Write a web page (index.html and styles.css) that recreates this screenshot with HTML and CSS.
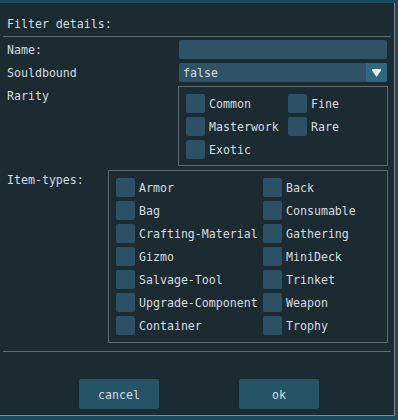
FILE: index.html
```html
<!DOCTYPE html>
<html>
<head>
<meta charset="utf-8">
<link rel="stylesheet" href="styles.css">
</head>
<body>
<div class="window">
  <div class="title">Filter details:</div>
  <div class="sep"></div>
  <div class="form">
    <div class="row">
      <div class="label">Name:</div>
      <div class="input"></div>
    </div>
    <div class="row">
      <div class="label">Souldbound</div>
      <div class="select"><span class="val">false</span><span class="arrow"><svg width="9" height="8" viewBox="0 0 9 8"><path d="M0 0H9V1.5L4.5 8L0 1.5Z" fill="#e8eef0"/></svg></span></div>
    </div>
    <div class="row">
      <div class="label">Rarity</div>
      <div class="box rarity">
        <div class="item"><span class="cb"></span><span class="txt">Common</span></div>
        <div class="item"><span class="cb"></span><span class="txt">Fine</span></div>
        <div class="item"><span class="cb"></span><span class="txt">Masterwork</span></div>
        <div class="item"><span class="cb"></span><span class="txt">Rare</span></div>
        <div class="item"><span class="cb"></span><span class="txt">Exotic</span></div>
      </div>
    </div>
    <div class="row">
      <div class="label">Item-types:</div>
      <div class="box types">
        <div class="item"><span class="cb"></span><span class="txt">Armor</span></div>
        <div class="item"><span class="cb"></span><span class="txt">Back</span></div>
        <div class="item"><span class="cb"></span><span class="txt">Bag</span></div>
        <div class="item"><span class="cb"></span><span class="txt">Consumable</span></div>
        <div class="item"><span class="cb"></span><span class="txt">Crafting-Material</span></div>
        <div class="item"><span class="cb"></span><span class="txt">Gathering</span></div>
        <div class="item"><span class="cb"></span><span class="txt">Gizmo</span></div>
        <div class="item"><span class="cb"></span><span class="txt">MiniDeck</span></div>
        <div class="item"><span class="cb"></span><span class="txt">Salvage-Tool</span></div>
        <div class="item"><span class="cb"></span><span class="txt">Trinket</span></div>
        <div class="item"><span class="cb"></span><span class="txt">Upgrade-Component</span></div>
        <div class="item"><span class="cb"></span><span class="txt">Weapon</span></div>
        <div class="item"><span class="cb"></span><span class="txt">Container</span></div>
        <div class="item"><span class="cb"></span><span class="txt">Trophy</span></div>
      </div>
    </div>
  </div>
  <div class="sep sep2"></div>
  <div class="buttons">
    <div class="btn">cancel</div>
    <div class="btn">ok</div>
  </div>
</div>
</body>
</html>
```
FILE: styles.css
```css
html, body {
  margin: 0;
  padding: 0;
  background: #1c4c5b;
  width: 398px;
  height: 420px;
  overflow: hidden;
}
body {
  font-family: "DejaVu Sans Mono", monospace;
  font-size: 11.6px;
  color: #d6dde0;
}
.window {
  margin-top: 3px;
  width: 395px;
  height: 413px;
  box-sizing: border-box;
  background: #1c2b32;
  border-right: 1px solid #7d8c91;
  border-bottom: 1px solid #7d8c91;
}
.title {
  padding: 14px 0 0 7px;
  line-height: 14px;
  height: 19px;
}
.sep {
  margin: 0 3px;
  height: 1px;
  background: #5d6d73;
}
.form {
  padding: 3px 6px 0 7px;
  display: flex;
  flex-direction: column;
  gap: 4px;
}
.row {
  display: flex;
  justify-content: space-between;
  align-items: flex-start;
}
.label {
  line-height: 17px;
  height: 19px;
  box-sizing: border-box;
  padding-top: 2px;
  white-space: pre;
}
.input {
  width: 208px;
  height: 19px;
  background: #2f5366;
  border-radius: 2px;
  margin-right: 1px;
}
.select {
  width: 208px;
  height: 19px;
  background: #2f5366;
  border-radius: 2px;
  margin-right: 1px;
  display: flex;
  justify-content: space-between;
  align-items: center;
}
.select .val { padding: 2px 0 0 4px; line-height: 17px; height: 17px; }
.select .arrow {
  width: 21px;
  height: 19px;
  background: #2e6780;
  border-radius: 0 2px 2px 0;
  display: flex;
  align-items: center;
  justify-content: center;
}
.box {
  border: 1px solid #5d6d73;
  box-sizing: border-box;
  display: grid;
  row-gap: 4px;
  padding: 7px 0 6px 7px;
}
.rarity {
  width: 210px;
  grid-template-columns: 102px 1fr;
}
.types {
  width: 280px;
  padding-bottom: 7px;
  grid-template-columns: 147px 1fr;
}
.item {
  display: flex;
  align-items: center;
  height: 19px;
  white-space: pre;
}
.txt { padding-top: 2px; line-height: 17px; }
.cb {
  width: 19px;
  height: 19px;
  background: #2c5165;
  border-radius: 2px;
  margin-right: 4px;
  flex: none;
}
.sep2 { margin-top: 8px; }
.buttons {
  display: flex;
  gap: 80px;
  padding: 27px 0 0 79px;
}
.btn {
  width: 80px;
  height: 30px;
  box-sizing: border-box;
  background: #245466;
  border-radius: 2px;
  line-height: 28px;
  padding-top: 2px;
  text-align: center;
}
```
